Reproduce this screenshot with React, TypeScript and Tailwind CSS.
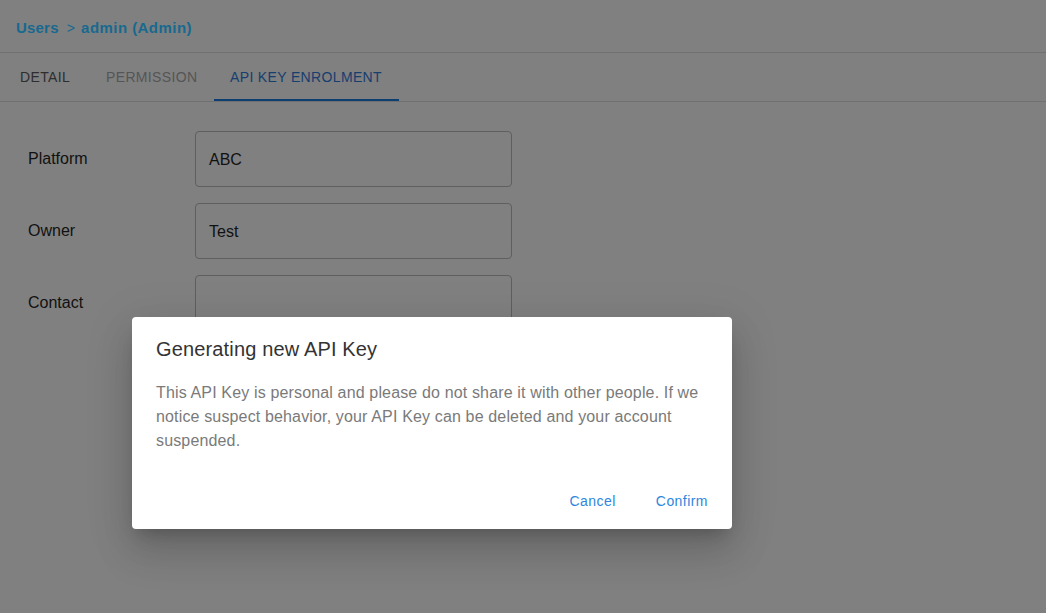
import React from "react";

const FIELDS = [
  { label: "Platform", value: "ABC" },
  { label: "Owner", value: "Test" },
  { label: "Contact", value: "" },
];

const TABS = [
  { label: "DETAIL", cls: "text-[#2e2e2e] w-[90px] pl-5" },
  { label: "PERMISSION", cls: "text-[#555555] w-[124px] pl-4" },
  { label: "API KEY ENROLMENT", cls: "text-[#163e6e] w-[185px] pl-4", active: true },
];

export default function App() {
  return (
    <div
      className="relative w-[1046px] h-[613px] overflow-hidden bg-[#808080]"
      style={{ fontFamily: '"Liberation Sans", Arial, sans-serif' }}
    >
      {/* Breadcrumb */}
      <div className="h-[53px] flex items-center pl-4 pt-[5px] border-b border-[#707070] text-[15px] font-bold text-[#17698f] tracking-[0.2px]">
        <span>Users</span>
        <span className="ml-[8px] mr-[6px] font-normal text-[14px]">&gt;</span>
        <span className="tracking-[0.45px]">admin (Admin)</span>
      </div>

      {/* Tabs */}
      <div className="flex h-[49px] border-b border-[#707070]">
        {TABS.map((t) => (
          <div
            key={t.label}
            className={`relative flex items-center h-full text-[14px] tracking-[0.35px] ${t.cls}`}
          >
            {t.label}
            {t.active && (
              <div className="absolute left-0 right-0 bottom-0 h-[2px] bg-[#0d3e72]" />
            )}
          </div>
        ))}
      </div>

      {/* Form */}
      <div className="pt-[29px] pl-7 flex flex-col gap-4">
        {FIELDS.map((f) => (
          <div key={f.label} className="flex items-center">
            <div className="w-[167px] text-[16px] text-[#111111]">{f.label}</div>
            <div className="w-[317px] h-[56px] rounded border border-[#5f5f5f] flex items-center px-[13px] pt-px text-[16px] text-[#111111]">
              {f.value}
            </div>
          </div>
        ))}
      </div>

      {/* Dialog */}
      <div className="absolute left-[132px] top-[317px] w-[600px] h-[212px] bg-white rounded-[4px] shadow-[0_11px_15px_-7px_rgba(0,0,0,0.2),0_24px_38px_3px_rgba(0,0,0,0.12),0_9px_46px_8px_rgba(0,0,0,0.08)] flex flex-col">
        <div className="px-6 pt-[20px] text-[20px] text-[#333333] leading-[24px] tracking-[0.15px]">
          Generating new API Key
        </div>
        <div className="px-6 pt-[20px] text-[16px] leading-[24px] text-[#7a7a7a] tracking-[0.15px]">
          This API Key is personal and please do not share it with other people. If we notice suspect
          behavior, your API Key can be deleted and your account suspended.
        </div>
        <div className="mt-auto flex justify-end gap-[8px] px-2 pb-[10px]">
          <button className="px-4 h-[36px] text-[14px] text-[#2f86dd] tracking-[0.45px]">Cancel</button>
          <button className="px-4 h-[36px] text-[14px] text-[#2f86dd] tracking-[0.45px]">Confirm</button>
        </div>
      </div>
    </div>
  );
}
